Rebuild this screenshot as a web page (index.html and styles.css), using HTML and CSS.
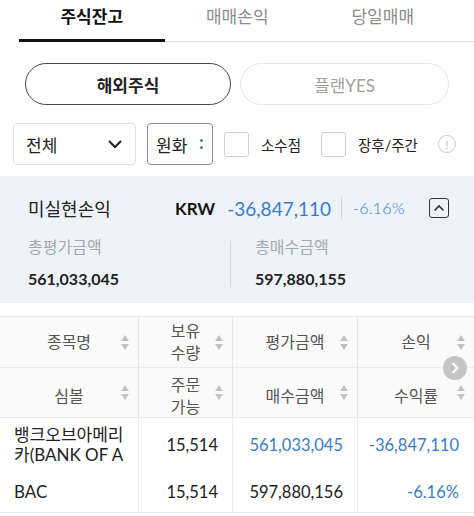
FILE: index.html
```html
<!DOCTYPE html>
<html lang="ko">
<head>
<meta charset="utf-8">
<link rel="stylesheet" href="styles.css">
</head>
<body>
<div class="page">
  <nav class="tabs">
    <div class="tab active">주식잔고</div>
    <div class="tab">매매손익</div>
    <div class="tab">당일매매</div>
  </nav>

  <div class="segments">
    <div class="seg on">해외주식</div>
    <div class="seg off">플랜YES</div>
  </div>

  <div class="filters">
    <div class="select">
      <span>전체</span>
      <svg width="16" height="10" viewBox="0 0 16 10"><path d="M2 2 L8 8 L14 2" fill="none" stroke="#222" stroke-width="2"/></svg>
    </div>
    <div class="currency">
      <span>원화</span>
      <span class="dots"><i></i><i></i></span>
    </div>
    <label class="check"><span class="box"></span><span>소수점</span></label>
    <label class="check"><span class="box"></span><span>장후/주간</span></label>
    <span class="info">!</span>
  </div>

  <section class="summary">
    <div class="sum-top">
      <span class="sum-title">미실현손익</span>
      <span class="krw">KRW</span>
      <span class="pl">-36,847,110</span>
      <span class="vbar"></span>
      <span class="rate">-6.16%</span>
      <span class="toggle">
        <svg width="12" height="8" viewBox="0 0 12 8"><path d="M1.5 6.5 L6 2 L10.5 6.5" fill="none" stroke="#333" stroke-width="1.6"/></svg>
      </span>
    </div>
    <div class="sum-bottom">
      <div class="sum-col">
        <div class="sum-label">총평가금액</div>
        <div class="sum-value">561,033,045</div>
      </div>
      <div class="sum-div"></div>
      <div class="sum-col second">
        <div class="sum-label">총매수금액</div>
        <div class="sum-value">597,880,155</div>
      </div>
    </div>
  </section>

  <div class="table">
    <div class="th"><span class="ht">종목명</span><span class="sort"></span></div>
    <div class="th"><span class="ht">보유<br>수량</span><span class="sort"></span></div>
    <div class="th"><span class="ht">평가금액</span><span class="sort"></span></div>
    <div class="th"><span class="ht">손익</span><span class="sort"></span></div>

    <div class="th row2"><span class="ht">심볼</span><span class="sort"></span></div>
    <div class="th row2"><span class="ht">주문<br>가능</span><span class="sort"></span></div>
    <div class="th row2"><span class="ht">매수금액</span><span class="sort"></span></div>
    <div class="th row2"><span class="ht">수익률</span><span class="sort"></span></div>

    <div class="td name tall">뱅크오브아메리<br>카(BANK OF A</div>
    <div class="td num tall">15,514</div>
    <div class="td num blue tall">561,033,045</div>
    <div class="td num blue tall pr">-36,847,110</div>

    <div class="td name last">BAC</div>
    <div class="td num last">15,514</div>
    <div class="td num last">597,880,156</div>
    <div class="td num blue last pr">-6.16%</div>

    <span class="scroll-btn">
      <svg width="10" height="14" viewBox="0 0 10 14"><path d="M2.5 2 L7.5 7 L2.5 12" fill="none" stroke="#fff" stroke-width="2.2"/></svg>
    </span>
  </div>
</div>
</body>
</html>
```

FILE: styles.css
```css
* { box-sizing: border-box; margin: 0; padding: 0; }
html, body { background: #fff; }
body {
  font-family: "Lato", "Noto Sans CJK KR", "Noto Sans", sans-serif;
  color: #222;
  width: 474px;
  height: 516px;
  overflow: hidden;
}
.page { display: flex; flex-direction: column; }

.tabs {
  display: flex;
  margin-left: 19px;
  height: 42px;
  border-bottom: 1px solid #dedede;
}
.tab {
  width: 145.5px;
  text-align: center;
  font-size: 17px;
  line-height: 34px;
  color: #8c8c8c;
}
.tab.active {
  color: #111;
  font-weight: 700;
  border-bottom: 3px solid #111;
  margin-bottom: -1px;
}

.segments {
  display: flex;
  gap: 9px;
  padding: 21px 25px 0 25px;
}
.seg {
  height: 42px;
  border-radius: 21px;
  display: flex;
  align-items: center;
  justify-content: center;
  font-size: 17px;
}
.seg.on { width: 206px; border: 1.5px solid #444; font-weight: 700; color: #222; }
.seg.off { width: 209px; border: 1px solid #e6e6e6; color: #a0a0a0; }

.filters {
  display: flex;
  align-items: center;
  padding: 18px 0 0 13px;
  height: 60px;
}
.select {
  width: 123px;
  height: 42px;
  border: 1px solid #e3e3e3;
  border-radius: 4px;
  display: flex;
  align-items: center;
  justify-content: space-between;
  padding: 0 12px 0 12px;
  font-size: 17px;
}
.currency {
  margin-left: 11px;
  width: 66px;
  height: 42px;
  border: 1px solid #8f8f8f;
  border-radius: 4px;
  display: flex;
  align-items: center;
  padding-left: 8px;
  font-size: 17px;
  gap: 13px;
}
.dots { display: flex; flex-direction: column; gap: 4px; }
.dots i { display: block; width: 3px; height: 3px; border-radius: 50%; background: #3f7cc6; }
.check {
  display: flex;
  align-items: center;
  font-size: 14.5px;
  color: #222;
  margin-left: 11px;
}
.check + .check { margin-left: 20px; }
.box {
  width: 25px;
  height: 25px;
  border: 1px solid #cfcfcf;
  border-radius: 3px;
  margin-right: 12px;
}
.info {
  margin-left: 20px;
  width: 18px;
  height: 18px;
  border: 1px solid #c9c9c9;
  border-radius: 50%;
  color: #bdbdbd;
  font-size: 12px;
  display: flex;
  align-items: center;
  justify-content: center;
}

.summary {
  margin-top: 11px;
  background: #eef3f9;
  height: 127px;
  padding: 18px 25px 0 28px;
}
.sum-top { display: flex; align-items: center; height: 28px; }
.sum-title { font-size: 18px; color: #222; width: 147px; }
.krw { font-size: 17px; font-weight: 700; color: #111; }
.pl { font-size: 19px; color: #3a7cc7; margin-left: 12px; }
.vbar { width: 1px; height: 22px; background: #cdd3da; margin: 0 11px 0 10px; }
.rate { font-size: 16.5px; color: #3a7cc7; font-weight: 300; }
.toggle {
  margin-left: auto;
  width: 20px;
  height: 20px;
  border: 1.5px solid #333;
  border-radius: 3px;
  display: flex;
  align-items: center;
  justify-content: center;
}
.sum-bottom { display: flex; margin-top: 14px; }
.sum-col { width: 202px; }
.sum-col.second { padding-left: 24px; }
.sum-label { font-size: 16px; color: #a5a9ae; line-height: 22px; }
.sum-value { font-size: 16px; font-weight: 700; color: #222; margin-top: 11px; line-height: 20px; }
.sum-div { width: 1px; height: 46px; background: #d3d8de; margin-top: 5px; }

.table {
  margin-top: 13px;
  position: relative;
  display: grid;
  grid-template-columns: 139px 94px 125px 116px;
  border-top: 1px solid #e7e7e7;
}
.th {
  height: 51px;
  background: #fafafa;
  border-bottom: 1px solid #ececec;
  border-right: 1px solid #e5e5e5;
  display: flex;
  align-items: center;
  overflow: hidden;
  padding: 0 8px 0 17px;
  font-size: 16px;
  color: #555;
}
.th:nth-child(4n) { border-right: none; }
.th.row2 { height: 50px; padding-top: 6px; }
.ht { flex: 1; text-align: center; line-height: 22px; }
.sort {
  width: 9px;
  height: 15px;
  position: relative;
  flex: none;
}
.sort::before, .sort::after {
  content: "";
  position: absolute;
  left: 0;
  border-left: 4.5px solid transparent;
  border-right: 4.5px solid transparent;
}
.sort::before { top: 0; border-bottom: 6.5px solid #c2c2c2; }
.sort::after { bottom: 0; border-top: 6.5px solid #c2c2c2; }
.th.row2 .sort { margin-top: -6px; }

.td {
  border-right: 1px solid #ececec;
  font-size: 16.5px;
  color: #222;
  display: flex;
  align-items: center;
}
.td:nth-child(4n) { border-right: none; }
.td.tall { height: 54px; }
.td.last { height: 41px; border-bottom: 1px solid #e7e7e7; }
.td.name { padding-left: 14px; line-height: 20px; font-size: 17px; }
.td.num { justify-content: flex-end; padding-right: 14px; }
.td.pr { padding-right: 15px; }
.blue { color: #3a7cc7 !important; }

.scroll-btn {
  position: absolute;
  left: 443px;
  top: 39px;
  width: 24px;
  height: 24px;
  border-radius: 50%;
  background: #c4c4c4;
  display: flex;
  align-items: center;
  justify-content: center;
}
```
